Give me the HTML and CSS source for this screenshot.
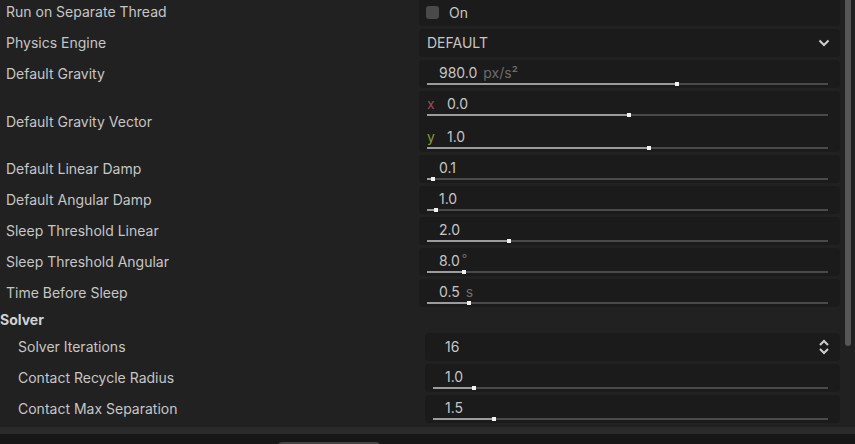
FILE: index.html
```html
<!DOCTYPE html>
<html lang="en">
<head>
    <meta charset="UTF-8">
    <title>Physics Settings</title>
    <link rel="stylesheet" href="styles.css">
</head>
<body>
    <div class="inspector">
        <div class="props">
            <div class="row first">
                <div class="label">Run on Separate Thread</div>
                <div class="editor check-editor">
                    <span class="check"></span>
                    <span class="check-text">On</span>
                </div>
            </div>
            <div class="row">
                <div class="label">Physics Engine</div>
                <div class="editor option-editor">
                    <span>DEFAULT</span>
                    <svg class="icon" width="12" height="8" viewBox="0 0 12 8"><path d="M1.5 1.5 L6 6 L10.5 1.5" fill="none" stroke="#cfcfcf" stroke-width="2"/></svg>
                </div>
            </div>
            <div class="row">
                <div class="label">Default Gravity</div>
                <div class="editor slider-editor">
                    <div class="value">980.0<span class="unit">px/s²</span></div>
                    <div class="track" style="--v: 62.3%"><div class="fill"></div><div class="thumb"></div></div>
                </div>
            </div>
            <div class="row vector">
                <div class="label">Default Gravity Vector</div>
                <div class="editor slider-editor">
                    <div class="value axis-value"><span class="axis axis-x">x</span>0.0</div>
                    <div class="track" style="--v: 50.4%"><div class="fill"></div><div class="thumb"></div></div>
                    <div class="value axis-value second"><span class="axis axis-y">y</span>1.0</div>
                    <div class="track" style="--v: 55.4%"><div class="fill"></div><div class="thumb"></div></div>
                </div>
            </div>
            <div class="row">
                <div class="label">Default Linear Damp</div>
                <div class="editor slider-editor">
                    <div class="value">0.1</div>
                    <div class="track" style="--v: 1.5%"><div class="fill"></div><div class="thumb"></div></div>
                </div>
            </div>
            <div class="row">
                <div class="label">Default Angular Damp</div>
                <div class="editor slider-editor">
                    <div class="value">1.0</div>
                    <div class="track" style="--v: 2.2%"><div class="fill"></div><div class="thumb"></div></div>
                </div>
            </div>
            <div class="row">
                <div class="label">Sleep Threshold Linear</div>
                <div class="editor slider-editor">
                    <div class="value">2.0</div>
                    <div class="track" style="--v: 20.4%"><div class="fill"></div><div class="thumb"></div></div>
                </div>
            </div>
            <div class="row">
                <div class="label">Sleep Threshold Angular</div>
                <div class="editor slider-editor">
                    <div class="value">8.0<span class="unit deg">°</span></div>
                    <div class="track" style="--v: 9.2%"><div class="fill"></div><div class="thumb"></div></div>
                </div>
            </div>
            <div class="row">
                <div class="label">Time Before Sleep</div>
                <div class="editor slider-editor">
                    <div class="value">0.5<span class="unit">s</span></div>
                    <div class="track" style="--v: 10.5%"><div class="fill"></div><div class="thumb"></div></div>
                </div>
            </div>

            <div class="section">Solver</div>

            <div class="row sub">
                <div class="label">Solver Iterations</div>
                <div class="editor spin-editor">
                    <span>16</span>
                    <svg class="icon" width="12" height="16" viewBox="0 0 12 16"><path d="M2 6 L6 2 L10 6 M2 10 L6 14 L10 10" fill="none" stroke="#cfcfcf" stroke-width="2"/></svg>
                </div>
            </div>
            <div class="row sub">
                <div class="label">Contact Recycle Radius</div>
                <div class="editor slider-editor">
                    <div class="value">1.0</div>
                    <div class="track" style="--v: 10.4%"><div class="fill"></div><div class="thumb"></div></div>
                </div>
            </div>
            <div class="row sub">
                <div class="label">Contact Max Separation</div>
                <div class="editor slider-editor">
                    <div class="value">1.5</div>
                    <div class="track" style="--v: 15.4%"><div class="fill"></div><div class="thumb"></div></div>
                </div>
            </div>
        </div>
        <div class="scrollbar"><div class="grabber"></div></div>
    </div>
    <div class="band"></div>
    <div class="dock-bottom"><div class="tab"></div></div>
</body>
</html>
```

FILE: styles.css
```css
body {
    margin: 0;
    width: 855px;
    height: 444px;
    overflow: hidden;
    background-color: #212121;
    font-family: Inter, "Noto Sans", sans-serif;
    font-size: 14px;
    color: #c6c6c6;
}
.inspector {
    display: flex;
    height: 427px;
    overflow: hidden;
}
.props {
    width: 840px;
    display: flex;
    flex-direction: column;
    gap: 3px;
    margin-top: -2px;
}
.row {
    display: grid;
    grid-template-columns: 419px 1fr;
    height: 28px;
    flex-shrink: 0;
}
.row.vector {
    height: 61px;
}
.label {
    padding-left: 6px;
    padding-bottom: 1px;
    display: flex;
    align-items: center;
    white-space: nowrap;
}
.editor {
    background-color: #1b1b1b;
    border-radius: 4px;
    box-sizing: border-box;
}
.row.sub .label {
    padding-left: 18px;
}
.row.sub .editor {
    margin-left: 6px;
}
.section {
    height: 20px;
    line-height: 19px;
    flex-shrink: 0;
    font-weight: bold;
    color: #d2d2d2;
}

/* bool */
.check-editor {
    display: flex;
    align-items: center;
    padding-left: 7px;
}
.check {
    width: 13px;
    height: 13px;
    background-color: #4a4a4a;
    border-radius: 3px;
}
.check-text {
    margin-left: 10px;
}

/* option / spin */
.option-editor,
.spin-editor {
    display: flex;
    align-items: center;
    justify-content: space-between;
    padding: 0 10px 1px 8px;
}
.spin-editor {
    padding-left: 20px;
    padding-right: 10px;
}

/* slider */
.slider-editor {
    padding: 3px 12px 0 8px;
}
.value {
    height: 20px;
    line-height: 20px;
    padding-left: 12px;
}
.value.axis-value {
    padding-left: 0;
}
.value.second {
    margin-top: 11px;
}
.unit {
    color: #6c6c6c;
    margin-left: 6px;
}
.unit.deg {
    margin-left: 2px;
    position: relative;
    top: -3px;
    font-size: 12px;
}
.axis {
    display: inline-block;
    width: 20px;
}
.axis-x {
    color: #9b4a5a;
}
.axis-y {
    color: #899a3e;
}
.track {
    position: relative;
    height: 2px;
    background-color: #4a4a4a;
}
.fill {
    height: 2px;
    width: var(--v);
    background-color: #9c9c9c;
}
.thumb {
    position: absolute;
    top: -1px;
    left: var(--v);
    margin-left: -2px;
    width: 4px;
    height: 4px;
    background-color: #f2f2f2;
}

.scrollbar {
    width: 15px;
    padding-left: 5px;
    box-sizing: border-box;
}
.grabber {
    width: 6px;
    height: 346px;
    background-color: #565656;
    border-radius: 0 0 3px 3px;
}
.band {
    height: 7px;
    background-color: #2b2b2b;
}
.dock-bottom {
    height: 10px;
    background-color: #171717;
    padding-left: 278px;
    padding-top: 8px;
    box-sizing: border-box;
}
.tab {
    width: 102px;
    height: 4px;
    background-color: #444;
    border-radius: 4px 4px 0 0;
}
```
